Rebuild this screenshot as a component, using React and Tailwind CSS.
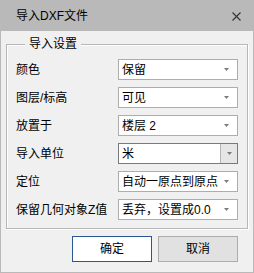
import React from 'react'

const FONT = "font-['Liberation_Sans','Noto_Sans_CJK_SC',sans-serif]"

function Arrow() {
  return (
    <svg width="5" height="3" viewBox="0 0 5 3" className="block">
      <polygon points="0,0 5,0 2.5,3" fill="#7a7a7a" />
    </svg>
  )
}

function Combo({ value, editable }) {
  if (editable) {
    return (
      <div className="w-[120px] h-[21px] border border-[#7a7a7a] bg-white flex items-stretch">
        <div className="flex-1 pl-[3px] flex items-center leading-[14px]">{value}</div>
        <div className="w-[17px] border-l border-[#b4b4b4] bg-[#e6e6e6] flex items-center justify-center">
          <Arrow />
        </div>
      </div>
    )
  }
  return (
    <div className="w-[120px] h-[21px] border border-[#adadad] bg-white flex items-center justify-between pl-[3px] pr-[8px]">
      <span className="leading-[14px] whitespace-nowrap">{value}</span>
      <Arrow />
    </div>
  )
}

const ROWS = [
  { label: '颜色', value: '保留' },
  { label: '图层/标高', value: '可见' },
  { label: '放置于', value: '楼层 2' },
  { label: '导入单位', value: '米', editable: true },
  { label: '定位', value: '自动一原点到原点' },
  { label: '保留几何对象Z值', value: '丢弃，设置成0.0' },
]

export default function App() {
  return (
    <div className={`w-[254px] h-[273px] border border-[#b9b9b9] bg-[#f0f0f0] flex flex-col text-[12px] text-black ${FONT}`}>
      <div className="h-[30px] bg-[#b9b9b9] flex items-center justify-between pl-[15px] pr-[12px]">
        <span className="leading-[14px]">导入DXF文件</span>
        <svg width="9" height="9" viewBox="0 0 9 9" className="block">
          <line x1="0.5" y1="0.5" x2="8.5" y2="8.5" stroke="#333" strokeWidth="1.1" />
          <line x1="8.5" y1="0.5" x2="0.5" y2="8.5" stroke="#333" strokeWidth="1.1" />
        </svg>
      </div>

      <div className="flex-1 px-[5px] pt-[13px]">
        <div className="relative h-[185px] border border-[#b7b7b7] shadow-[inset_1px_1px_0_#fff,1px_1px_0_#fff] pt-[14px] px-[9px] flex flex-col gap-[7px]">
          <span className="absolute left-[18px] -top-[7px] px-[4px] bg-[#f0f0f0] leading-[12px]">导入设置</span>
          {ROWS.map((r) => (
            <div key={r.label} className="h-[21px] flex items-center justify-between">
              <span className="leading-[14px] whitespace-nowrap">{r.label}</span>
              <Combo value={r.value} editable={r.editable} />
            </div>
          ))}
        </div>

        <div className="flex justify-end gap-[6px] mt-[7px] pr-[10px]">
          <button className="w-[80px] h-[26px] bg-white border border-[#2a5694] leading-[14px]">确定</button>
          <button className="w-[80px] h-[26px] bg-[#e1e1e1] border border-[#adadad] leading-[14px]">取消</button>
        </div>
      </div>
    </div>
  )
}
